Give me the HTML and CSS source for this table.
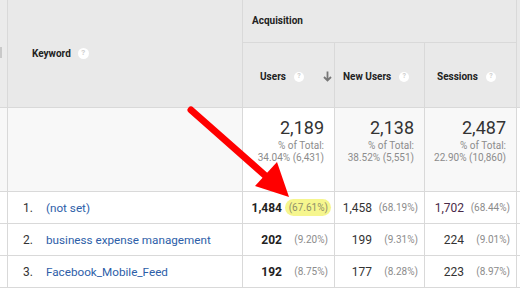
FILE: index.html
```html
<!DOCTYPE html>
<html>
<head>
<meta charset="utf-8">
<link rel="stylesheet" href="styles.css">
</head>
<body>
<div class="table">
  <div class="cell strip head-span"><span class="scroll-mark"></span></div>
  <div class="cell kw-head head-span"><span class="th">Keyword</span><span class="help">?</span></div>
  <div class="cell group-head"><span class="th">Acquisition</span></div>
  <div class="cell edge head-span"></div>

  <div class="cell col-head users-head"><span class="th">Users</span><span class="help small">?</span>
    <svg class="sort" width="9" height="11" viewBox="0 0 9 11"><path d="M4.5 0.5V9.5M1 6l3.5 3.5L8 6" fill="none" stroke="#777" stroke-width="1.8"/></svg>
  </div>
  <div class="cell col-head nu-head"><span class="th">New Users</span><span class="help small">?</span></div>
  <div class="cell col-head ses-head"><span class="th">Sessions</span><span class="help small">?</span></div>

  <div class="cell strip total-row"></div>
  <div class="cell total-kw"></div>
  <div class="cell total sorted"><div class="big">2,189</div><div class="sub">% of Total:</div><div class="sub">34.04% (6,431)</div></div>
  <div class="cell total"><div class="big">2,138</div><div class="sub">% of Total:</div><div class="sub">38.52% (5,551)</div></div>
  <div class="cell total"><div class="big">2,487</div><div class="sub">% of Total:</div><div class="sub">22.90% (10,860)</div></div>
  <div class="cell edge"></div>

  <div class="cell strip"></div>
  <div class="cell kw"><span class="rank">1.</span><a class="link">(not set)</a></div>
  <div class="cell num"><span class="val bold">1,484</span><span class="pct"><span class="hl">(67.61%)</span></span></div>
  <div class="cell num"><span class="val">1,458</span><span class="pct">(68.19%)</span></div>
  <div class="cell num"><span class="val purple">1,702</span><span class="pct">(68.44%)</span></div>
  <div class="cell edge"></div>

  <div class="cell strip"></div>
  <div class="cell kw"><span class="rank">2.</span><a class="link">business expense management</a></div>
  <div class="cell num"><span class="val bold">202</span><span class="pct">(9.20%)</span></div>
  <div class="cell num"><span class="val">199</span><span class="pct">(9.31%)</span></div>
  <div class="cell num"><span class="val">224</span><span class="pct">(9.01%)</span></div>
  <div class="cell edge"></div>

  <div class="cell strip"></div>
  <div class="cell kw"><span class="rank">3.</span><a class="link">Facebook_Mobile_Feed</a></div>
  <div class="cell num"><span class="val bold">192</span><span class="pct">(8.75%)</span></div>
  <div class="cell num"><span class="val">177</span><span class="pct">(8.28%)</span></div>
  <div class="cell num"><span class="val">223</span><span class="pct">(8.97%)</span></div>
  <div class="cell edge"></div>
</div>

<svg class="annotation" width="520" height="290" viewBox="0 0 520 290">
  <line x1="191" y1="110" x2="268" y2="178" stroke="#ff0000" stroke-width="7" stroke-linecap="round"/>
  <polygon points="255,186 277,162 289,197" fill="#ff0000"/>
</svg>
</body>
</html>
```

FILE: styles.css
```css
html, body {
  margin: 0;
  padding: 0;
  background: #ffffff;
}
body {
  width: 520px;
  height: 290px;
  overflow: hidden;
  position: relative;
  font-family: Roboto, "Liberation Sans", sans-serif;
  color: #333;
}
.table {
  display: grid;
  grid-template-columns: 8px 235px 92px 90px 92px 3px;
  grid-template-rows: 43px 65px 84px 32px 32px 32px;
}
.cell {
  box-sizing: border-box;
  border-right: 1px solid #d9d9d9;
  border-bottom: 1px solid #d9d9d9;
  background: #fff;
}
.edge {
  border-right: none;
}
.head-span {
  grid-row: span 2;
  background: #e9e9e9;
}
.strip {
  position: relative;
}
.strip.head-span {
  background: #ebebeb;
}
.scroll-mark {
  position: absolute;
  left: 0;
  top: 47px;
  width: 2px;
  height: 11px;
  background: #c9c9c9;
}
.total-row {
  background: #f8f8f8;
}
.th {
  font-family: Roboto, "Liberation Sans", sans-serif;
  font-weight: 700;
  font-size: 10px;
  color: #222;
}
.kw-head {
  display: flex;
  align-items: center;
  padding-left: 24px;
  padding-bottom: 1px;
  gap: 7px;
}
.help {
  display: inline-flex;
  align-items: center;
  justify-content: center;
  width: 11px;
  height: 11px;
  border-radius: 50%;
  background: #fff;
  color: #cfcfcf;
  font-size: 8px;
  font-weight: 700;
  line-height: 1;
}
.help.small {
  width: 10px;
  height: 10px;
  font-size: 7px;
}
.group-head {
  grid-column: span 3;
  background: #e9e9e9;
  display: flex;
  align-items: center;
  padding-left: 9px;
  padding-bottom: 1px;
}
.col-head {
  background: #e9e9e9;
  display: flex;
  align-items: center;
  gap: 8px;
  padding-top: 3px;
}
.users-head {
  padding-left: 17px;
}
.users-head .sort {
  margin-left: 11px;
  margin-top: 0;
}
.nu-head {
  padding-left: 8px;
}
.ses-head {
  padding-left: 12px;
}
.total-kw {
  background: #f8f8f8;
}
.total {
  background: #f8f8f8;
  text-align: right;
  padding: 9px 10px 0 0;
}
.total.sorted {
  background: #fff;
}
.big {
  font-size: 18px;
  line-height: 22px;
  color: #333;
  margin-bottom: 1px;
}
.sub {
  font-size: 10px;
  line-height: 12px;
  color: #8c8c8c;
}
.kw {
  display: flex;
  align-items: center;
  font-size: 12px;
  padding-left: 15px;
}
.rank {
  width: 23px;
  color: #333;
}
.link {
  color: #2d5ea8;
  font-size: 11.7px;
}
.num {
  display: flex;
  align-items: center;
  justify-content: flex-end;
  padding-right: 6px;
}
.val {
  font-size: 12px;
  color: #333;
}
.val.bold {
  font-weight: 700;
  color: #222;
}
.val.purple {
  color: #4a2a48;
}
.pct {
  width: 46px;
  text-align: right;
  font-size: 10px;
  color: #8c8c8c;
}
.hl {
  display: inline-block;
  background: #f6f68e;
  border-radius: 9px;
  padding: 3px 3px 3px 4px;
  margin-right: -3px;
  color: #8f8f6a;
}
.annotation {
  position: absolute;
  left: 0;
  top: 0;
  pointer-events: none;
}
```
